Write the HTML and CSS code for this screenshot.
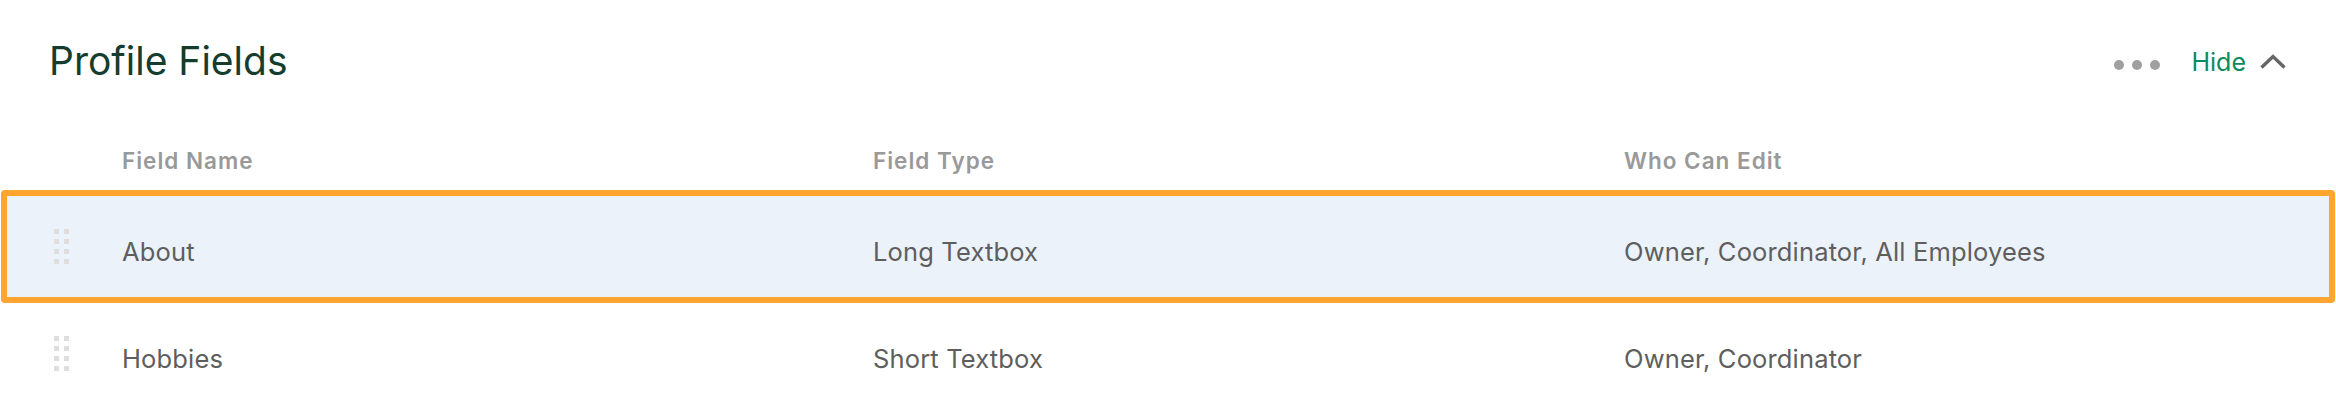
FILE: index.html
```html
<!DOCTYPE html>
<html lang="en">
<head>
<meta charset="utf-8">
<title>Profile Fields</title>
<link rel="stylesheet" href="styles.css">
</head>
<body>
<section class="card">
  <header class="card-head">
    <h2 class="title">Profile Fields</h2>
    <div class="actions">
      <span class="dots" aria-label="More"><i></i><i></i><i></i></span>
      <button class="hide" type="button">Hide
        <svg class="chev" width="26" height="15" viewBox="0 0 26 15" aria-hidden="true"><polyline points="1.5,13.5 13,2.5 24.5,13.5" fill="none" stroke="#666" stroke-width="3.4" stroke-linejoin="miter"/></svg>
      </button>
    </div>
  </header>
  <div class="table">
    <div class="row head">
      <div class="cell"></div>
      <div class="th">Field Name</div>
      <div class="th">Field Type</div>
      <div class="th">Who Can Edit</div>
    </div>
    <div class="row item selected">
      <div class="cell"><span class="grip"><i></i><i></i><i></i><i></i><i></i><i></i><i></i><i></i></span></div>
      <div class="td">About</div>
      <div class="td">Long Textbox</div>
      <div class="td">Owner, Coordinator, All Employees</div>
    </div>
    <div class="row item">
      <div class="cell"><span class="grip"><i></i><i></i><i></i><i></i><i></i><i></i><i></i><i></i></span></div>
      <div class="td">Hobbies</div>
      <div class="td">Short Textbox</div>
      <div class="td">Owner, Coordinator</div>
    </div>
  </div>
</section>
</body>
</html>
```

FILE: styles.css
```css
html, body {
  margin: 0;
  padding: 0;
  background: #ffffff;
}
body {
  font-family: Inter, "Liberation Sans", sans-serif;
  color: #5e5e5e;
  overflow: hidden;
}
.card {
  width: 2336px;
}
.card-head {
  display: flex;
  align-items: center;
  justify-content: space-between;
  padding: 37px 50px 0 49px;
  height: 48px;
}
.title {
  margin: 0;
  font-size: 39px;
  line-height: 48px;
  font-weight: 400;
  color: #143d2d;
}
.actions {
  display: flex;
  align-items: center;
  margin-top: 2px;
}
.dots {
  display: flex;
  gap: 8px;
  margin-right: 31px;
  margin-top: 6px;
}
.dots i {
  width: 10px;
  height: 10px;
  border-radius: 50%;
  background: #a0a0a0;
}
.hide {
  display: flex;
  align-items: center;
  gap: 14px;
  border: 0;
  background: none;
  padding: 0;
  font-family: inherit;
  font-size: 25px;
  line-height: 30px;
  color: #0b8a61;
  cursor: pointer;
}
.chev {
  display: block;
  margin-top: -2px;
}
.table {
  margin-top: 64px;
}
.row {
  display: grid;
  grid-template-columns: 115px 751px 751px 1fr;
  align-items: center;
  margin: 0 1px;
  border-style: solid;
  border-color: transparent;
  border-width: 0 6px;
}
.row.head {
  height: 24px;
  margin-bottom: 17px;
}
.th {
  font-size: 22.5px;
  line-height: 24px;
  font-weight: 600;
  color: #999999;
  letter-spacing: 1px;
}
.row.item {
  height: 101px;
}
.row.selected {
  border-width: 6px;
  border-color: #ffa530;
  border-radius: 4px;
  background: #ecf2fa;
}
.cell {
  padding-left: 47px;
  display: flex;
  align-items: center;
}
.td {
  font-size: 25.5px;
  line-height: 30px;
  padding-top: 10px;
  letter-spacing: 0.15px;
  color: #5e5e5e;
}
.grip {
  display: grid;
  grid-template-columns: 5px 5px;
  grid-auto-rows: 5px;
  gap: 5px;
}
.grip i {
  background: #dedede;
}
```
